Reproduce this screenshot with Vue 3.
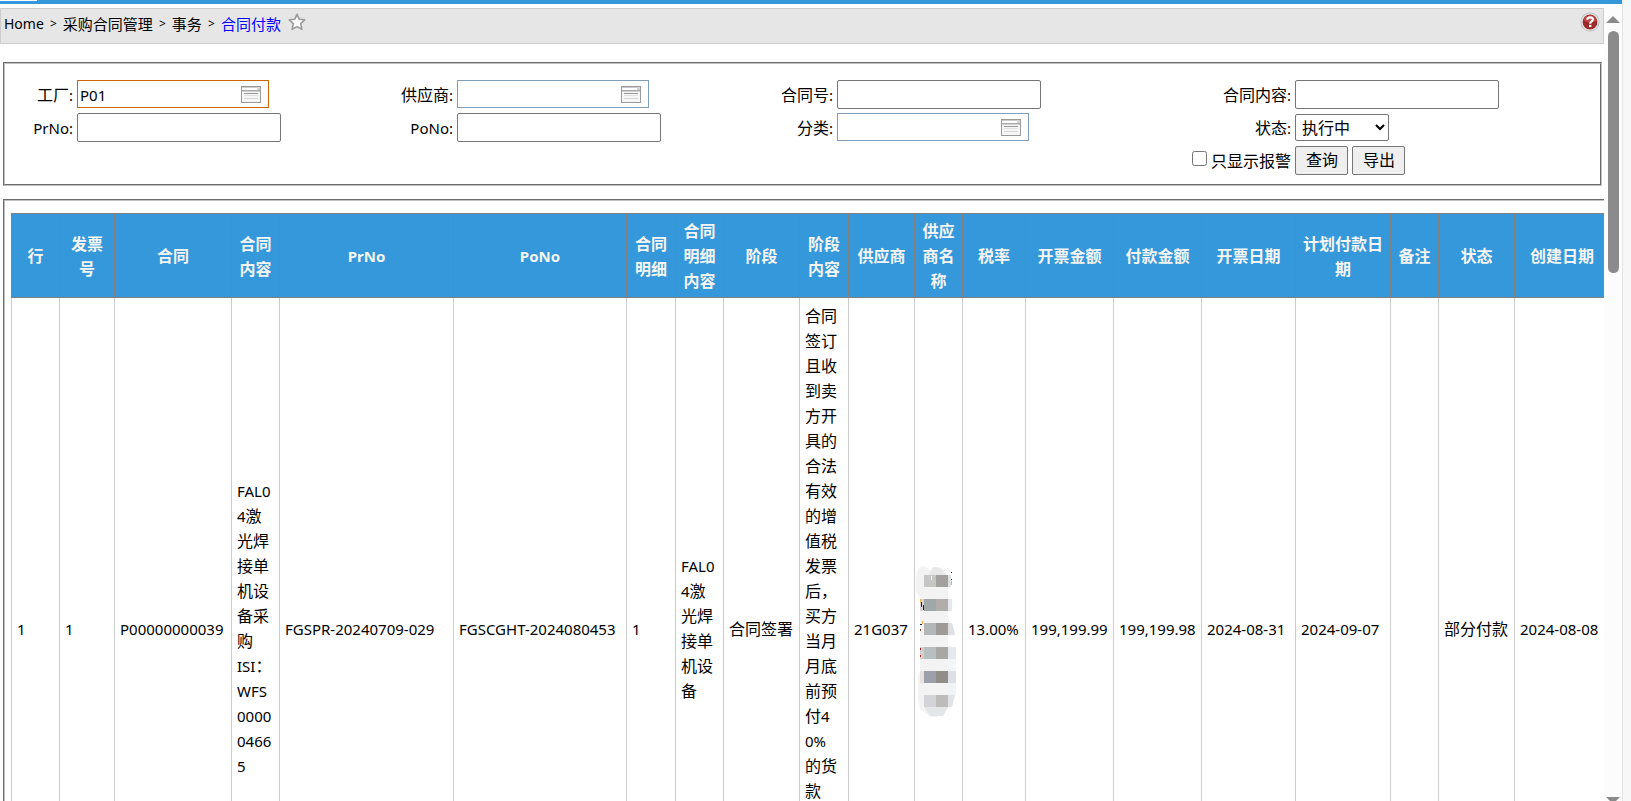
<script setup>
import { h, ref } from 'vue'

// Renders a string with its Latin runs slightly smaller than its Chinese runs.
const Txt = (props) =>
  (props.t.match(/[\x20-\x7e]+|[^\x20-\x7e]+/g) || []).map((run) =>
    h('span', { class: /^[\x20-\x7e]/.test(run) ? 'latin' : 'han' }, run)
  )
Txt.props = ['t']

const factory = ref('P01')
const supplier = ref('')
const category = ref('')
const status = ref('执行中')
const onlyAlarm = ref(false)

const fields = [
  { id: 'factory', label: '工厂:', kind: 'lookup', model: factory, active: true },
  { id: 'supplier', label: '供应商:', kind: 'lookup', model: supplier },
  { id: 'contract', label: '合同号:', kind: 'text' },
  { id: 'content', label: '合同内容:', kind: 'text' },
  { id: 'prno', label: 'PrNo:', kind: 'text' },
  { id: 'pono', label: 'PoNo:', kind: 'text' },
  { id: 'category', label: '分类:', kind: 'lookup', model: category },
  { id: 'status', label: '状态:', kind: 'select' }
]

const columns = [
  { head: ['行'], width: 48, cell: ['1'] },
  { head: ['发票', '号'], width: 55, cell: ['1'] },
  { head: ['合同'], width: 117, cell: ['P00000000039'] },
  {
    head: ['合同', '内容'],
    width: 48,
    cell: ['FAL0', '4激', '光焊', '接单', '机设', '备采', '购', 'ISI：', 'WFS', '0000', '0466', '5']
  },
  { head: ['PrNo'], width: 174, cell: ['FGSPR-20240709-029'] },
  { head: ['PoNo'], width: 173, cell: ['FGSCGHT-2024080453'] },
  { head: ['合同', '明细'], width: 49, cell: ['1'] },
  { head: ['合同', '明细', '内容'], width: 48, cell: ['FAL0', '4激', '光焊', '接单', '机设', '备'] },
  { head: ['阶段'], width: 76, cell: ['合同签署'] },
  {
    head: ['阶段', '内容'],
    width: 49,
    top: true,
    cell: ['合同', '签订', '且收', '到卖', '方开', '具的', '合法', '有效', '的增', '值税', '发票', '后，', '买方', '当月', '月底', '前预', '付4', '0%', '的货', '款']
  },
  { head: ['供应商'], width: 66, cell: ['21G037'] },
  { head: ['供应', '商名', '称'], width: 48, masked: true, cell: [] },
  { head: ['税率'], width: 63, cell: ['13.00%'] },
  { head: ['开票金额'], width: 88, cell: ['199,199.99'] },
  { head: ['付款金额'], width: 88, cell: ['199,199.98'] },
  { head: ['开票日期'], width: 94, cell: ['2024-08-31'] },
  { head: ['计划付款日', '期'], width: 95, cell: ['2024-09-07'] },
  { head: ['备注'], width: 48, cell: [] },
  { head: ['状态'], width: 76, cell: ['部分付款'] },
  { head: ['创建日期'], width: 95, cell: ['2024-08-08'] }
]
const tableWidth = columns.reduce((sum, c) => sum + c.width, 1)
</script>

<template>
  <div class="window">
    <div class="frame">
      <div class="topbar"><span class="tab"></span></div>
      <div class="body">
        <main class="page">
          <nav class="crumbs">
            <a href="#" class="home">Home</a><span class="sep">&gt;</span>
            <a href="#">采购合同管理</a><span class="sep">&gt;</span>
            <a href="#">事务</a><span class="sep">&gt;</span>
            <a href="#" class="current">合同付款</a>
            <button class="icon star" aria-label="收藏">
              <svg width="18" height="18" viewBox="0 0 18 18">
                <path d="M9 1.3 11.2 6.2 16.7 6.8 12.7 10.6 13.9 16.3 9 13.6 4.1 16.3 5.3 10.6 1.3 6.8 6.8 6.2Z" fill="#fcfcfc" stroke="#9b9b9b" stroke-width="1.6" stroke-linejoin="round" />
              </svg>
            </button>
            <button class="icon help" aria-label="帮助">
              <svg width="20" height="20" viewBox="0 0 20 20">
                <circle cx="10" cy="10" r="9.5" fill="#b9bcc1" />
                <circle cx="10" cy="10" r="8.7" fill="#e3e5e8" />
                <circle cx="10" cy="10" r="7.4" fill="#9c2a28" />
                <path d="M3.4 8.5A6.8 6.8 0 0 1 16.6 8.5Q12 12.5 3.4 8.5Z" fill="#bb4a46" />
                <path d="M7.3 7.8Q7.4 5.3 10.2 5.3 12.9 5.4 12.9 7.5 12.9 8.8 11.4 9.6 10.2 10.3 10.2 11.7" fill="none" stroke="#fff" stroke-width="2.2" />
                <rect x="9" y="12.8" width="2.4" height="2.3" fill="#fff" />
              </svg>
            </button>
          </nav>

          <form class="panel search" @submit.prevent>
            <template v-for="f in fields" :key="f.id">
              <label :for="f.id" class="label"><Txt :t="f.label" /></label>
              <div class="value">
                <div v-if="f.kind === 'lookup'" class="lookup" :class="{ active: f.active }">
                  <input :id="f.id" v-model="f.model.value" type="text" />
                  <svg width="20" height="17" viewBox="0 0 20 17">
                    <rect x=".5" y=".5" width="19" height="16" fill="#f6f6f6" stroke="#999" />
                    <rect x="1" y="1" width="18" height="1" fill="#ccc" />
                    <rect x="1" y="2" width="15" height="2" fill="#fff" />
                    <rect x="16" y="1" width="3" height="3" fill="#d6d6d6" />
                    <rect x="1" y="4" width="18" height="1" fill="#aaa" />
                    <rect x="1" y="5" width="18" height="1" fill="#d2d2d2" />
                    <rect x="3" y="7" width="14" height="1" fill="#999" />
                    <rect x="3" y="9" width="14" height="1" fill="#e2e2e2" />
                    <rect x="3" y="12" width="14" height="1" fill="#d6d6d6" />
                  </svg>
                </div>
                <select v-else-if="f.kind === 'select'" :id="f.id" v-model="status">
                  <option>执行中</option>
                </select>
                <input v-else :id="f.id" type="text" class="text" />
              </div>
            </template>
            <div class="check">
              <input id="alarm" v-model="onlyAlarm" type="checkbox" />
              <label for="alarm">只显示报警</label>
            </div>
            <div class="value actions">
              <button class="btn">查询</button>
              <button class="btn">导出</button>
            </div>
          </form>

          <section class="panel results">
            <table :style="{ width: tableWidth + 'px' }">
              <colgroup>
                <col v-for="(c, i) in columns" :key="i" :style="{ width: c.width + 'px' }" />
              </colgroup>
              <thead>
                <tr>
                  <th v-for="(c, i) in columns" :key="i" scope="col">
                    <div v-for="line in c.head" :key="line"><Txt :t="line" /></div>
                  </th>
                </tr>
              </thead>
              <tbody>
                <tr>
                  <td v-for="(c, i) in columns" :key="i" :class="{ top: c.top, masked: c.masked }">
                    <svg v-if="c.masked" width="47" height="178" viewBox="0 0 47 178">
                      <path d="M1 37Q2 28 8 27L12 28 15 32 21 28Q28 28 31 33V40H33V78L35 85H33V107H36V145L32 165 27 176 21 178 14 177 5 170 3 160V138L5 131V58L1 52Z" fill="#f3f3f3" />
                      <path d="M14 35 18 28Q25 27 29 34L32 36H14Z" fill="#e8e8e8" />
                      <g>
                        <rect x="9" y="36" width="12" height="12" fill="#c6c6c7" /><rect x="21" y="36" width="12" height="12" fill="#a3a19e" /><rect x="33" y="36" width="3" height="12" fill="#dfe2e5" />
                        <rect x="9" y="60" width="12" height="12" fill="#a0a7aa" /><rect x="21" y="60" width="12" height="12" fill="#b1adaa" /><rect x="33" y="60" width="4" height="12" fill="#e5e9ed" />
                        <rect x="9" y="84" width="12" height="12" fill="#b3b7b8" /><rect x="21" y="84" width="12" height="12" fill="#9f9a97" /><path d="M33 84H37L40 96H33Z" fill="#dedfe3" />
                        <rect x="9" y="108" width="12" height="12" fill="#b7bfc1" /><rect x="21" y="108" width="12" height="12" fill="#a9a7a3" /><rect x="33" y="108" width="8" height="12" fill="#e5e9ee" />
                        <rect x="9" y="132" width="12" height="12" fill="#9ca0aa" /><rect x="21" y="132" width="12" height="12" fill="#918d89" /><rect x="33" y="132" width="8" height="12" fill="#dee0e5" />
                        <rect x="9" y="156" width="12" height="12" fill="#d2d4d7" /><rect x="21" y="156" width="12" height="12" fill="#bdbcba" /><path d="M33 156H40L37 168H33Z" fill="#e1e3e6" />
                        <path d="M9 168H33L28 177H15Z" fill="#e5e6e7" />
                        <rect x="33" y="120" width="8" height="12" fill="#f4f5f7" /><rect x="33" y="144" width="8" height="12" fill="#f2f3f5" />
                        <rect x="5" y="60" width="4" height="12" fill="#d9d4d2" /><rect x="5" y="108" width="4" height="12" fill="#d8cccc" /><rect x="5" y="132" width="4" height="12" fill="#e6e1dd" />
                      </g>
                      <g fill="#222">
                        <rect x="36" y="33" width="1" height="1" /><rect x="36" y="40" width="1" height="1" /><rect x="16" y="37" width="1" height="4" fill="#fff" />
                        <rect x="6" y="63" width="1" height="5" /><rect x="8" y="66" width="1" height="5" />
                        <rect x="5" y="60" width="1" height="4" fill="#e8b65a" /><rect x="7" y="82" width="1" height="3" fill="#f3ab4e" />
                        <rect x="5" y="85" width="2" height="1" /><rect x="5" y="90" width="1" height="2" fill="#8c3a28" />
                        <rect x="5" y="109" width="1" height="2" fill="#9b1c1c" /><rect x="5" y="116" width="1" height="2" fill="#b03020" />
                        <rect x="36" y="42" width="1" height="4" fill="#8ac4ee" />
                      </g>
                    </svg>
                    <div v-for="(line, n) in c.cell" :key="n"><Txt :t="line" /></div>
                  </td>
                </tr>
              </tbody>
            </table>
          </section>
        </main>
        <div class="scroll">
          <svg width="14" height="7" viewBox="0 0 14 7"><path d="M7 0 14 7H0Z" fill="#8b8b8b" /></svg>
          <div class="thumb"></div>
          <svg class="down" width="14" height="7" viewBox="0 0 14 7"><path d="M0 0H14L7 7Z" fill="#8b8b8b" /></svg>
        </div>
      </div>
    </div>
  </div>
</template>

<style>
body {
  overflow: hidden;
}
.latin {
  font-size: 15px;
}
</style>

<style scoped>
.window {
  height: 100vh;
  overflow: hidden;
  background: #f7f7f7;
  padding-right: 8px;
  box-sizing: border-box;
  font: 16px/25px "Noto Sans", "Noto Sans CJK SC", sans-serif;
  color: #000;
}
.frame {
  height: 100%;
  display: flex;
  flex-direction: column;
  background: #fff;
  border-right: 1px solid #e4e4e4;
  box-sizing: border-box;
}
.topbar {
  flex: none;
  height: 4px;
  background: #3498db;
}
.tab {
  display: block;
  width: 37px;
  height: 1px;
  background: #fff;
}
.body {
  flex: 1;
  min-height: 0;
  display: flex;
}
.page {
  flex: 1;
  min-width: 0;
  overflow: hidden;
  padding-top: 4px;
}
.crumbs {
  display: flex;
  height: 36px;
  box-sizing: border-box;
  padding: 3px 3px 0;
  border: 1px solid #ccc;
  background: #e6e6e6;
  font-size: 15px;
  line-height: 24px;
}
.crumbs a {
  color: #000;
  text-decoration: none;
}
.crumbs .home {
  font-size: 14px;
}
.crumbs .current {
  color: #00f;
}
.sep {
  width: 19px;
  text-align: center;
  font-size: 12px;
}
.icon {
  border: 0;
  padding: 0;
  background: none;
  line-height: 0;
  height: 20px;
}
.star {
  margin-left: 7px;
}
.help {
  margin-left: auto;
}
.panel {
  border: 2px groove #c0c0c0;
}
.search {
  display: grid;
  grid-template-columns:
    minmax(0, 66fr) minmax(0, 306fr) minmax(0, 66fr) minmax(0, 306fr)
    minmax(0, 66fr) minmax(0, 346fr) minmax(0, 104fr) minmax(0, 301fr);
  grid-auto-rows: 29px;
  gap: 4px;
  align-items: center;
  margin: 18px 2px 0 3px;
  padding: 16px 4px 9px 2px;
}
.label {
  padding-top: 2px;
  text-align: right;
  white-space: nowrap;
}
.value {
  height: 29px;
  display: flex;
  align-items: flex-start;
}
.text,
.lookup {
  box-sizing: border-box;
  border: 1px solid #767676;
  background: #fff;
}
.text {
  width: 204px;
  height: 29px;
  border-radius: 2px;
  padding: 0 3px;
  font: inherit;
}
.lookup {
  display: flex;
  align-items: center;
  width: 192px;
  height: 28px;
  padding-right: 7px;
  border-color: #7f9db9;
}
.lookup.active {
  border-color: #cc6600;
}
.lookup input {
  flex: 1;
  min-width: 0;
  border: 0;
  outline: 0;
  padding: 1px 2px 0;
  background: none;
  font: 15px/20px "Noto Sans", "Noto Sans CJK SC", sans-serif;
}
select {
  align-self: center;
  width: 94px;
  height: 27px;
  padding-left: 2px;
  border: 1px solid #767676;
  border-radius: 2px;
  background: #fff;
  color: #000;
  font-family: inherit;
  font-size: 16px;
}
.check {
  grid-column: 7;
  display: flex;
  justify-content: flex-end;
  white-space: nowrap;
}
.check input {
  width: 15px;
  height: 15px;
  margin: 4px 4px 0 0;
}
.check label {
  padding-top: 2px;
}
.actions {
  gap: 4px;
}
.btn {
  height: 29px;
  padding: 0 9px 0 10px;
  border: 1px solid #767676;
  border-radius: 2px;
  background: #efefef;
  color: #000;
  font: inherit;
}
.results {
  margin: 13px 0 0 3px;
  padding: 12px 0 0 6px;
  border-right: 0;
  border-bottom: 0;
  overflow: hidden;
}
table {
  table-layout: fixed;
  border-collapse: collapse;
}
th,
td {
  padding: 4px 5px;
  white-space: nowrap;
}
th {
  padding: 5px 0 3px;
  border: 1px solid #808080;
  background: #3498db;
  color: #f5f5f5;
  text-align: center;
}
td {
  height: 652px;
  border: 1px solid #ccc;
  vertical-align: middle;
}
td.top {
  padding-top: 6px;
  vertical-align: top;
}
td.masked {
  padding: 3px 0 5px;
}
td svg {
  display: block;
}
.scroll {
  flex: none;
  width: 18px;
  box-sizing: border-box;
  padding-top: 12px;
  display: flex;
  flex-direction: column;
  align-items: center;
  background: #fcfcfc;
}
.scroll svg {
  flex: none;
}
.thumb {
  width: 11px;
  height: 242px;
  margin-top: 8px;
  border-radius: 6px;
  background: #8b8b8b;
}
.down {
  margin-top: auto;
  margin-bottom: -3px;
}
</style>
